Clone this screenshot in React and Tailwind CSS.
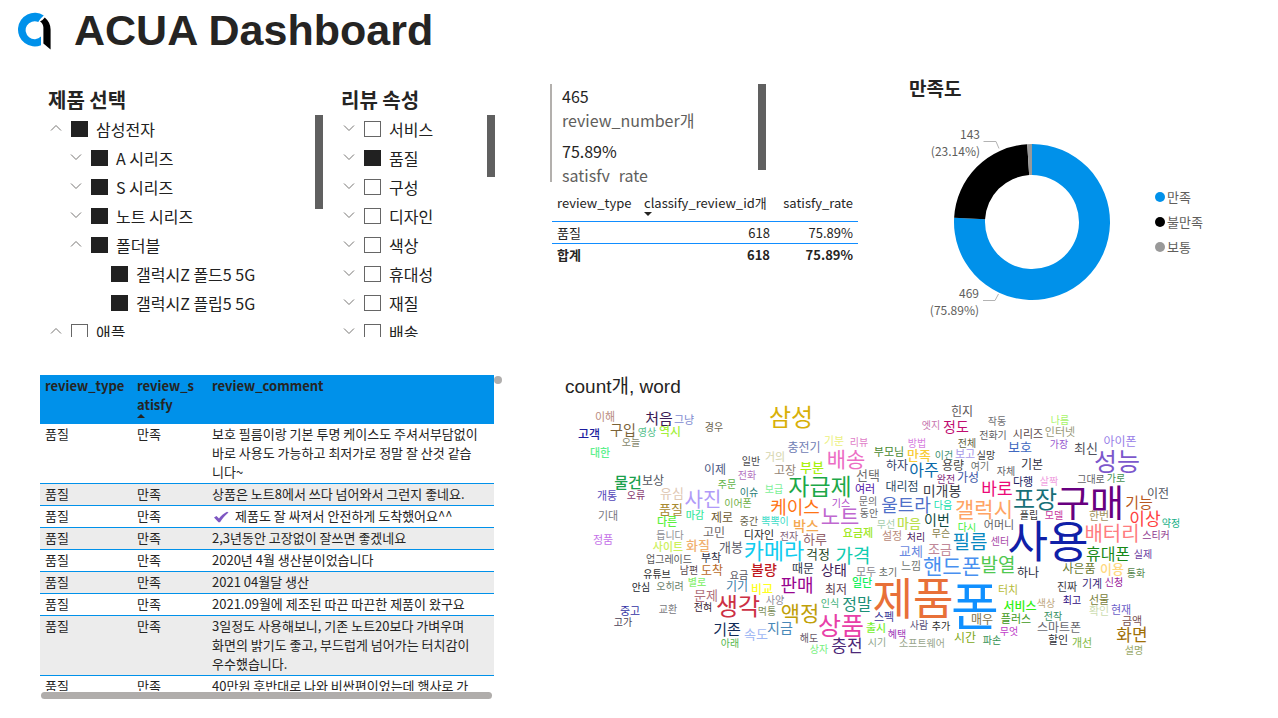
import React from "react";

const products = [
  { label: "삼성전자", level: 0, open: true, checked: true },
  { label: "A 시리즈", level: 1, open: false, checked: true },
  { label: "S 시리즈", level: 1, open: false, checked: true },
  { label: "노트 시리즈", level: 1, open: false, checked: true },
  { label: "폴더블", level: 1, open: true, checked: true },
  { label: "갤럭시Z 폴드5 5G", level: 2, leaf: true, checked: true },
  { label: "갤럭시Z 플립5 5G", level: 2, leaf: true, checked: true },
  { label: "애플", level: 0, open: true, checked: false },
];

const attributes = [
  { label: "서비스", level: 0 },
  { label: "품질", level: 0, checked: true },
  { label: "구성", level: 0 },
  { label: "디자인", level: 0 },
  { label: "색상", level: 0 },
  { label: "휴대성", level: 0 },
  { label: "재질", level: 0 },
  { label: "배송", level: 0 },
];

const reviews = [
  "보호 필름이랑 기본 투명 케이스도 주셔서부담없이\n바로 사용도 가능하고 최저가로 정말 잘 산것 같습\n니다~",
  "상품은 노트8에서 쓰다 넘어와서 그런지 좋네요.",
  "제품도 잘 싸져서 안전하게 도착했어요^^",
  "2,3년동안 고장없이 잘쓰면 좋겠네요",
  "2020년 4월 생산분이었습니다",
  "2021 04월달 생산",
  "2021.09월에 제조된 따끈 따끈한 제품이 왔구요",
  "3일정도 사용해보니, 기존 노트20보다 가벼우며\n화면의 밝기도 좋고, 부드럽게 넘어가는 터치감이\n우수했습니다.",
  "40만원 후반대로 나와 비싼편이었는데 행사로 가",
];

// [word, centre x, centre y, size, colour]
const words = [
  ["이해", 605, 417, 11, "#b98a7e"], ["처음", 659, 418, 15, "#3b1a55"], ["그냥", 684, 420, 11, "#7d8ad0"],
  ["구입", 623, 430, 14, "#7a6238"], ["영상", 647, 432, 10, "#55c08c"], ["역시", 670, 432, 12, "#a4f03c"],
  ["경우", 714, 427, 10, "#6d6550"], ["고객", 589, 435, 12, "#1c1c9e"], ["오늘", 631, 442, 10, "#85866a"],
  ["대한", 600, 453, 11, "#5cf08c"], ["물건", 628, 482, 15, "#1ba04c"], ["보상", 653, 481, 12, "#51555e"],
  ["유심", 672, 493, 13, "#e0c8b4"], ["사진", 703, 500, 20, "#b09af8"], ["개통", 607, 496, 11, "#5347b8"],
  ["오류", 636, 495, 10, "#86366c"], ["이제", 715, 470, 12, "#4d5884"], ["전화", 747, 475, 10, "#b272c0"],
  ["일반", 751, 461, 10, "#47474b"], ["주문", 727, 484, 10, "#62b448"], ["이슈", 749, 492, 10, "#2a7e78"],
  ["이어폰", 738, 503, 10, "#70b048"], ["품질", 671, 509, 13, "#a88a30"], ["기대", 608, 516, 11, "#77777f"],
  ["마감", 695, 515, 10, "#40e8a0"], ["다른", 667, 522, 11, "#5cf03c"], ["제로", 722, 518, 12, "#6e5a30"],
  ["중간", 749, 521, 10, "#666048"], ["정품", 603, 540, 11, "#c470e8"], ["듭니다", 670, 535, 10, "#8f8f95"],
  ["고민", 714, 533, 12, "#6c6666"], ["사이트", 668, 547, 11, "#cdf05c"], ["화질", 698, 545, 13, "#f0b070"],
  ["개봉", 731, 547, 13, "#5b5b68"], ["업그레이드", 669, 559, 10, "#595959"], ["부착", 711, 558, 11, "#2e2e44"],
  ["유튜브", 657, 574, 10, "#2f2f2f"], ["남편", 689, 570, 10, "#58484e"], ["도착", 712, 571, 12, "#b86a28"],
  ["요금", 739, 575, 10, "#54505c"], ["안심", 641, 587, 10, "#201c2c"], ["오히려", 670, 586, 10, "#68806c"],
  ["별로", 697, 582, 10, "#88f070"], ["기기", 737, 587, 12, "#3c7ca8"], ["문제", 706, 595, 13, "#b0707c"],
  ["교환", 668, 609, 10, "#77777d"], ["전혀", 703, 607, 10, "#36202e"], ["생각", 738, 606, 24, "#cc3044"],
  ["중고", 630, 611, 11, "#3434a4"], ["고가", 623, 622, 10, "#4a4054"], ["기존", 727, 629, 15, "#122c58"],
  ["속도", 756, 634, 13, "#a0b8f4"], ["아래", 730, 643, 10, "#54b84c"],
  ["삼성", 791, 417, 24, "#d8b008"], ["기분", 834, 441, 11, "#ecf080"], ["리뷰", 859, 442, 10, "#e080c8"],
  ["충전기", 804, 448, 12, "#7080b4"], ["거의", 775, 457, 11, "#d4d4ac"], ["배송", 846, 459, 21, "#ec6cc4"],
  ["고장", 785, 471, 12, "#948474"], ["부분", 812, 467, 13, "#a8f010"], ["선택", 868, 475, 13, "#6e6e70"],
  ["자급제", 820, 486, 23, "#1ca848"], ["보급", 774, 489, 10, "#7cf098"], ["여러", 865, 489, 11, "#5010a8"],
  ["케이스", 795, 507, 18, "#ff7414"], ["기스", 841, 503, 10, "#b048c8"], ["문의", 868, 501, 10, "#6e6e72"],
  ["노트", 840, 516, 21, "#c068d0"], ["동안", 869, 513, 10, "#69696c"], ["뽁뽁이", 775, 521, 10, "#40dcc8"],
  ["박스", 806, 526, 14, "#f4a850"], ["무선", 886, 524, 10, "#a4ccac"], ["디자인", 759, 535, 11, "#282828"],
  ["전자", 789, 536, 10, "#806078"], ["하루", 815, 539, 13, "#94646c"], ["요금제", 858, 533, 11, "#a0e828"],
  ["카메라", 774, 551, 22, "#10ccf0"], ["걱정", 818, 554, 13, "#284828"], ["가격", 853, 556, 19, "#10ccb0"],
  ["불량", 764, 570, 14, "#c01820"], ["때문", 803, 569, 12, "#303848"], ["상태", 834, 570, 14, "#402058"],
  ["모두", 866, 572, 11, "#8c8890"], ["초기", 888, 572, 10, "#606860"], ["판매", 797, 585, 18, "#980490"],
  ["일단", 862, 583, 11, "#10f058"], ["비교", 762, 590, 12, "#ffff20"], ["최저", 836, 590, 12, "#5c3c50"],
  ["사양", 775, 600, 10, "#8d8a98"], ["인식", 830, 603, 10, "#40b078"], ["정말", 857, 604, 16, "#1c9078"],
  ["먹통", 767, 611, 10, "#80905c"], ["액정", 800, 613, 21, "#c0a008"], ["상품", 841, 626, 25, "#e840a8"],
  ["지금", 780, 628, 14, "#4888b8"], ["해도", 809, 638, 10, "#685868"], ["상자", 819, 649, 10, "#78f080"],
  ["충전", 847, 646, 17, "#4c2878"], ["시기", 877, 642, 10, "#90a48c"], ["출시", 876, 628, 11, "#78f030"],
  ["스펙", 884, 617, 11, "#403898"],
  ["힌지", 962, 412, 12, "#5c5658"], ["엣지", 931, 425, 10, "#c878b0"], ["정도", 956, 427, 14, "#c00c70"],
  ["작동", 997, 421, 10, "#707074"], ["전화기", 993, 435, 10, "#606064"], ["방법", 917, 443, 10, "#d880e0"],
  ["전체", 967, 443, 10, "#5c6040"], ["부모님", 889, 452, 11, "#488830"], ["만족", 919, 455, 13, "#f8cc38"],
  ["이건", 944, 455, 10, "#409070"], ["보고", 965, 454, 11, "#a898e8"], ["실망", 986, 455, 10, "#403c40"],
  ["하자", 897, 466, 12, "#304068"], ["아주", 924, 470, 16, "#0868a8"], ["용량", 953, 466, 12, "#484848"],
  ["여기", 980, 466, 10, "#68706c"], ["자체", 1006, 471, 10, "#606064"], ["완전", 946, 479, 10, "#802878"],
  ["가성", 968, 478, 12, "#3c58a8"], ["대리점", 902, 487, 12, "#305068"], ["미개봉", 942, 491, 14, "#404048"],
  ["바로", 997, 489, 17, "#ec0878"], ["울트라", 906, 505, 18, "#5070c8"], ["다음", 943, 505, 10, "#18e0b0"],
  ["갤럭시", 984, 509, 21, "#ffa464"], ["마음", 909, 523, 13, "#bce050"], ["이번", 937, 520, 14, "#104840"],
  ["다시", 967, 527, 10, "#40f038"], ["어머니", 999, 525, 11, "#606064"], ["설정", 892, 536, 11, "#b88878"],
  ["처리", 916, 537, 10, "#4c1860"], ["무슨", 941, 533, 10, "#888048"], ["필름", 970, 542, 19, "#0888c0"],
  ["센터", 1000, 541, 10, "#a848a8"], ["교체", 911, 551, 13, "#6888e0"], ["조금", 940, 549, 13, "#c08898"],
  ["핸드폰", 952, 566, 21, "#4890f0"], ["발열", 998, 565, 19, "#50c850"], ["느낌", 911, 566, 11, "#707470"],
  ["제품", 913, 599, 44, "#e87038"], ["폰", 975, 607, 52, "#1090ff"], ["터치", 1008, 590, 11, "#b8bc38"],
  ["사람", 919, 625, 10, "#585078"], ["추가", 941, 626, 10, "#282828"], ["매우", 982, 620, 12, "#807048"],
  ["혜택", 897, 634, 10, "#a038b8"], ["소프트웨어", 922, 643, 10, "#98a48c"], ["시간", 965, 638, 12, "#80a818"],
  ["파손", 992, 640, 10, "#309050"],
  ["나름", 1060, 420, 10, "#a8f468"], ["시리즈", 1028, 434, 11, "#5c4848"], ["인터넷", 1060, 432, 11, "#989878"],
  ["가장", 1059, 444, 10, "#9858d0"], ["보호", 1020, 447, 13, "#4068c0"], ["최신", 1086, 448, 13, "#50505c"],
  ["아이폰", 1120, 442, 12, "#9880e8"], ["성능", 1117, 462, 25, "#7c58cc"], ["기본", 1032, 465, 12, "#303040"],
  ["다행", 1023, 482, 11, "#1c1c60"], ["살짝", 1049, 481, 10, "#f0a0e0"], ["그대로", 1091, 479, 10, "#606064"],
  ["가로", 1116, 478, 10, "#409050"], ["포장", 1035, 499, 24, "#187078"], ["구매", 1090, 503, 37, "#680080"],
  ["기능", 1139, 502, 15, "#b85820"], ["이전", 1158, 494, 12, "#505460"], ["플립", 1029, 515, 10, "#383838"],
  ["모델", 1054, 515, 10, "#c838a0"], ["한번", 1099, 516, 11, "#a09060"], ["이상", 1145, 519, 17, "#ff4040"],
  ["약정", 1171, 523, 10, "#18b088"],
  ["사용", 1048, 542, 44, "#1020a8"], ["배터리", 1112, 534, 20, "#ff7c80"], ["스티커", 1156, 535, 10, "#903890"],
  ["휴대폰", 1108, 554, 16, "#188818"], ["실제", 1143, 554, 10, "#6838a0"], ["하나", 1028, 573, 12, "#282c40"],
  ["사은품", 1079, 569, 12, "#687830"], ["이용", 1112, 569, 13, "#ffd880"], ["통화", 1136, 573, 10, "#588850"],
  ["진짜", 1067, 587, 11, "#404048"], ["기계", 1092, 584, 11, "#382878"], ["신청", 1114, 582, 10, "#981898"],
  ["서비스", 1020, 607, 12, "#30f010"], ["색상", 1046, 603, 10, "#c0a880"], ["최고", 1072, 600, 10, "#300880"],
  ["선물", 1099, 600, 11, "#788038"], ["확인", 1099, 611, 11, "#ccdcb0"], ["현재", 1121, 610, 11, "#6c60c8"],
  ["전작", 1053, 616, 10, "#389060"], ["플러스", 1016, 619, 11, "#409820"], ["금액", 1132, 621, 11, "#785050"],
  ["무엇", 1009, 631, 10, "#c040c8"], ["스마트폰", 1059, 628, 12, "#686870"], ["할인", 1058, 640, 11, "#303038"],
  ["개선", 1082, 643, 11, "#80b840"], ["화면", 1132, 635, 17, "#a07008"], ["설명", 1134, 650, 10, "#98a868"],
];

// Words drawn in the medium weight.
const heavy = new Set([
  "역시", "대한", "물건", "다른", "고객", "부분", "만족", "서비스", "요금제", "일단", "마음", "사이트", "화질", "불량",
  "비교", "별로", "이용", "출시", "마감", "박스",
]);

function Logo() {
  return (
    <svg viewBox="0 0 36 40" className="h-10 w-9 shrink-0" aria-hidden="true">
      <path d="M27.8 3.4A16.8 16.8 0 1 0 25 33.2V24.6A9 9 0 1 1 22.3 10C23.8 7.4 25.5 5.2 27.8 3.4Z" fill="#0091ea" />
      <path d="M28.8 5.4C32.4 8.3 34.6 12.5 34.6 17.5V37.4L27.4 31.4V15.5C27.4 12.8 26 10.6 24 9.4Q26.8 8.2 28.8 5.4Z" fill="#000" />
    </svg>
  );
}

function Chevron({ open }) {
  return (
    <svg viewBox="0 0 12 12" className="h-3 w-3" fill="none" stroke="#777573" strokeWidth="1">
      <path d={open ? "M1 8.5L6 3.5L11 8.5" : "M1 3.5L6 8.5L11 3.5"} />
    </svg>
  );
}

const indents = ["pl-0", "pl-5", "pl-10"];

function Slicer({ title, items, group, thumb }) {
  return (
    <section>
      <h2 className="pt-2 text-xl leading-[31px] font-bold">{title}</h2>
      <div className="flex h-[222px] justify-between overflow-hidden">
        <ul>
          {items.map((item, i) => (
            <li key={item.label} className={`flex h-[29px] items-start ${indents[item.level]}`}>
              <span className="flex w-[23px] shrink-0 pt-[7px] pl-[2px]">
                {!item.leaf && (
                  <button type="button" aria-label={`${item.label} 펼치기`}>
                    <Chevron open={item.open} />
                  </button>
                )}
              </span>
              <input
                id={`${group}-${i}`}
                type="checkbox"
                defaultChecked={item.checked}
                className="mt-[6px] h-4 w-[17px] shrink-0 appearance-none border border-[#666666] checked:border-[#212121] checked:bg-[#212121]"
              />
              <label htmlFor={`${group}-${i}`} className="pl-2 text-base leading-[28px] whitespace-nowrap text-[#212121]">
                {item.label}
              </label>
            </li>
          ))}
        </ul>
        <div className={`w-2 shrink-0 bg-[#606060] ${thumb}`} />
      </div>
    </section>
  );
}

function Summary() {
  return (
    <section>
      <div className="mt-2 flex h-[98px] w-[216px] justify-between overflow-hidden border-l-2 border-[#b3b0ad]">
        <dl className="flex flex-col-reverse justify-end gap-[7px] pl-[10px] text-base leading-6">
          <div>
            <dd>75.89%</dd>
            <dt className="text-[#605e5c]">satisfy_rate</dt>
          </div>
          <div>
            <dd>465</dd>
            <dt className="text-[#605e5c]">review_number개</dt>
          </div>
        </dl>
        <div className="h-[86px] w-2 bg-[#606060]" />
      </div>
      <table className="mt-2 ml-[2px] w-[306px] table-fixed text-[13px] leading-[19px]">
        <colgroup>
          <col className="w-[84px]" />
          <col className="w-[134px]" />
          <col />
        </colgroup>
        <thead>
          <tr className="border-b border-[#118dff] text-left align-top">
            <th className="h-[31px] pt-[3px] pl-[5px] font-normal">review_type</th>
            <th className="pt-[3px] pl-2 font-normal whitespace-nowrap">
              classify_review_id개
              <svg viewBox="0 0 8 4" className="h-1 w-2" fill="#252423"><path d="M0 0H8L4 4Z" /></svg>
            </th>
            <th className="pt-[3px] pr-[5px] text-right font-normal">satisfy_rate</th>
          </tr>
        </thead>
        <tbody>
          <tr className="border-b border-[#118dff]">
            <td className="h-[22px] pl-[5px]">품질</td>
            <td className="text-right">618</td>
            <td className="pr-[5px] text-right">75.89%</td>
          </tr>
          <tr className="font-bold">
            <td className="h-[22px] pl-[5px]">합계</td>
            <td className="text-right">618</td>
            <td className="pr-[5px] text-right">75.89%</td>
          </tr>
        </tbody>
      </table>
    </section>
  );
}

const slices = [
  { value: 469, color: "#0091ea" },
  { value: 143, color: "#000000" },
  { value: 6, color: "#999999" },
];

function slicePath(from, to) {
  const cx = 107, cy = 112, outer = 78, inner = 47;
  const point = (t, r) => `${cx + r * Math.sin(2 * Math.PI * t)} ${cy - r * Math.cos(2 * Math.PI * t)}`;
  const large = to - from > 0.5 ? 1 : 0;
  return `M${point(from, outer)}A${outer} ${outer} 0 ${large} 1 ${point(to, outer)}L${point(to, inner)}A${inner} ${inner} 0 ${large} 0 ${point(from, inner)}Z`;
}

function Satisfaction() {
  const total = slices.reduce((sum, s) => sum + s.value, 0);
  let start = 0;
  return (
    <section>
      <h2 className="text-[19px] leading-6 font-bold">만족도</h2>
      <div className="flex items-start pt-[10px] pl-4">
        <svg viewBox="0 0 190 220" className="h-[220px] w-[190px] shrink-0">
          {slices.map((s) => {
            const from = start / total;
            start += s.value;
            return <path key={s.color} d={slicePath(from, start / total)} fill={s.color} />;
          })}
          <g fill="none" stroke="#b3b3b3">
            <path d="M58.5 31.5H71L74 38.5" />
            <path d="M58 190.5H70L73.5 184" />
          </g>
          <g fontSize="12" fill="#605e5c" textAnchor="end">
            <text x="55" y="29">143</text>
            <text x="55" y="46">(23.14%)</text>
            <text x="54" y="188">469</text>
            <text x="54" y="205">(75.89%)</text>
          </g>
        </svg>
        <ul className="pt-[74px] pl-10 text-[13px] leading-[25px] text-[#605e5c]">
          <li className="flex items-center gap-[2px]"><span className="size-[10px] rounded-full bg-[#0091ea]" />만족</li>
          <li className="flex items-center gap-[2px]"><span className="size-[10px] rounded-full bg-black" />불만족</li>
          <li className="flex items-center gap-[2px]"><span className="size-[10px] rounded-full bg-[#999999]" />보통</li>
        </ul>
      </div>
    </section>
  );
}

function Reviews() {
  return (
    <section>
      <div className="flex">
        <div className="h-[316px] w-[454px] overflow-hidden">
          <table className="w-full table-fixed text-[13px] leading-[19px]">
            <colgroup>
              <col className="w-[92px]" />
              <col className="w-[75px]" />
              <col />
            </colgroup>
            <thead>
              <tr className="bg-[#0091ea] text-left align-top">
                <th className="h-[49px] pt-px pl-[5px]">review_type</th>
                <th className="pt-px pr-3 pl-[5px] break-all">
                  review_satisfy
                  <svg viewBox="0 0 8 4" className="h-1 w-2" fill="#252423"><path d="M0 4H8L4 0Z" /></svg>
                </th>
                <th className="pt-px pl-[5px]">review_comment</th>
              </tr>
            </thead>
            <tbody>
              {reviews.map((text, i) => (
                <tr key={text} className="border-b border-[#0091ea] align-top even:bg-[#ececec]">
                  <td className="pb-[2px] pl-[5px]">품질</td>
                  <td className="pb-[2px] pl-[5px]">만족</td>
                  <td className="pb-[2px] pl-[5px] whitespace-pre-line">
                    {i === 2 && (
                      <svg viewBox="0 0 16 12" className="mr-[6px] ml-px inline h-3 w-4">
                        <path d="M1 6.5L3.5 5L6 7.5C8 5 10.5 2.5 14 0.8L15.5 1.5C12 4.5 9.5 7.5 7 11.2H5.5Z" fill="#7e57c2" />
                      </svg>
                    )}
                    {text}
                  </td>
                </tr>
              ))}
            </tbody>
          </table>
        </div>
        <div className="mt-px size-2 rounded-full bg-[#b0aead]" />
      </div>
      <div className="mt-px ml-px h-[7px] w-[451px] rounded-full bg-[#b0adab]" />
    </section>
  );
}

function WordCloud() {
  return (
    <section>
      <h2 className="font-['Liberation_Sans','Noto_Sans_CJK_KR',sans-serif] text-[19px] leading-6">count개, word</h2>
      <svg viewBox="565 399 620 262" className="h-[262px] w-[620px]" textAnchor="middle">
        {words.map(([word, x, y, size, color]) => (
          <text
            key={word}
            x={x}
            y={y + Math.round(size * 0.37)}
            fontSize={size}
            fontWeight={heavy.has(word) ? 500 : 400}
            fill={color}
          >
            {word}
          </text>
        ))}
      </svg>
    </section>
  );
}

export default function App() {
  return (
    <main className="bg-white font-['Noto_Sans_CJK_KR',sans-serif] text-[#252423]">
      <header className="flex h-[76px] items-start gap-[22px] pt-[6px] pl-4">
        <div className="pt-[6px]"><Logo /></div>
        <h1 className="font-['Liberation_Sans',Arial,sans-serif] text-[43px] leading-[48px] font-bold">ACUA Dashboard</h1>
      </header>
      <div className="grid grid-cols-[293fr_209fr_359fr_369fr] pl-12">
        <div className="pr-[18px]"><Slicer title="제품 선택" items={products} group="product" thumb="h-[94px]" /></div>
        <div className="pr-[55px]"><Slicer title="리뷰 속성" items={attributes} group="attribute" thumb="h-[62px]" /></div>
        <Summary />
        <Satisfaction />
      </div>
      <div className="grid grid-cols-[525fr_713fr] pt-[38px] pl-10">
        <Reviews />
        <WordCloud />
      </div>
    </main>
  );
}
